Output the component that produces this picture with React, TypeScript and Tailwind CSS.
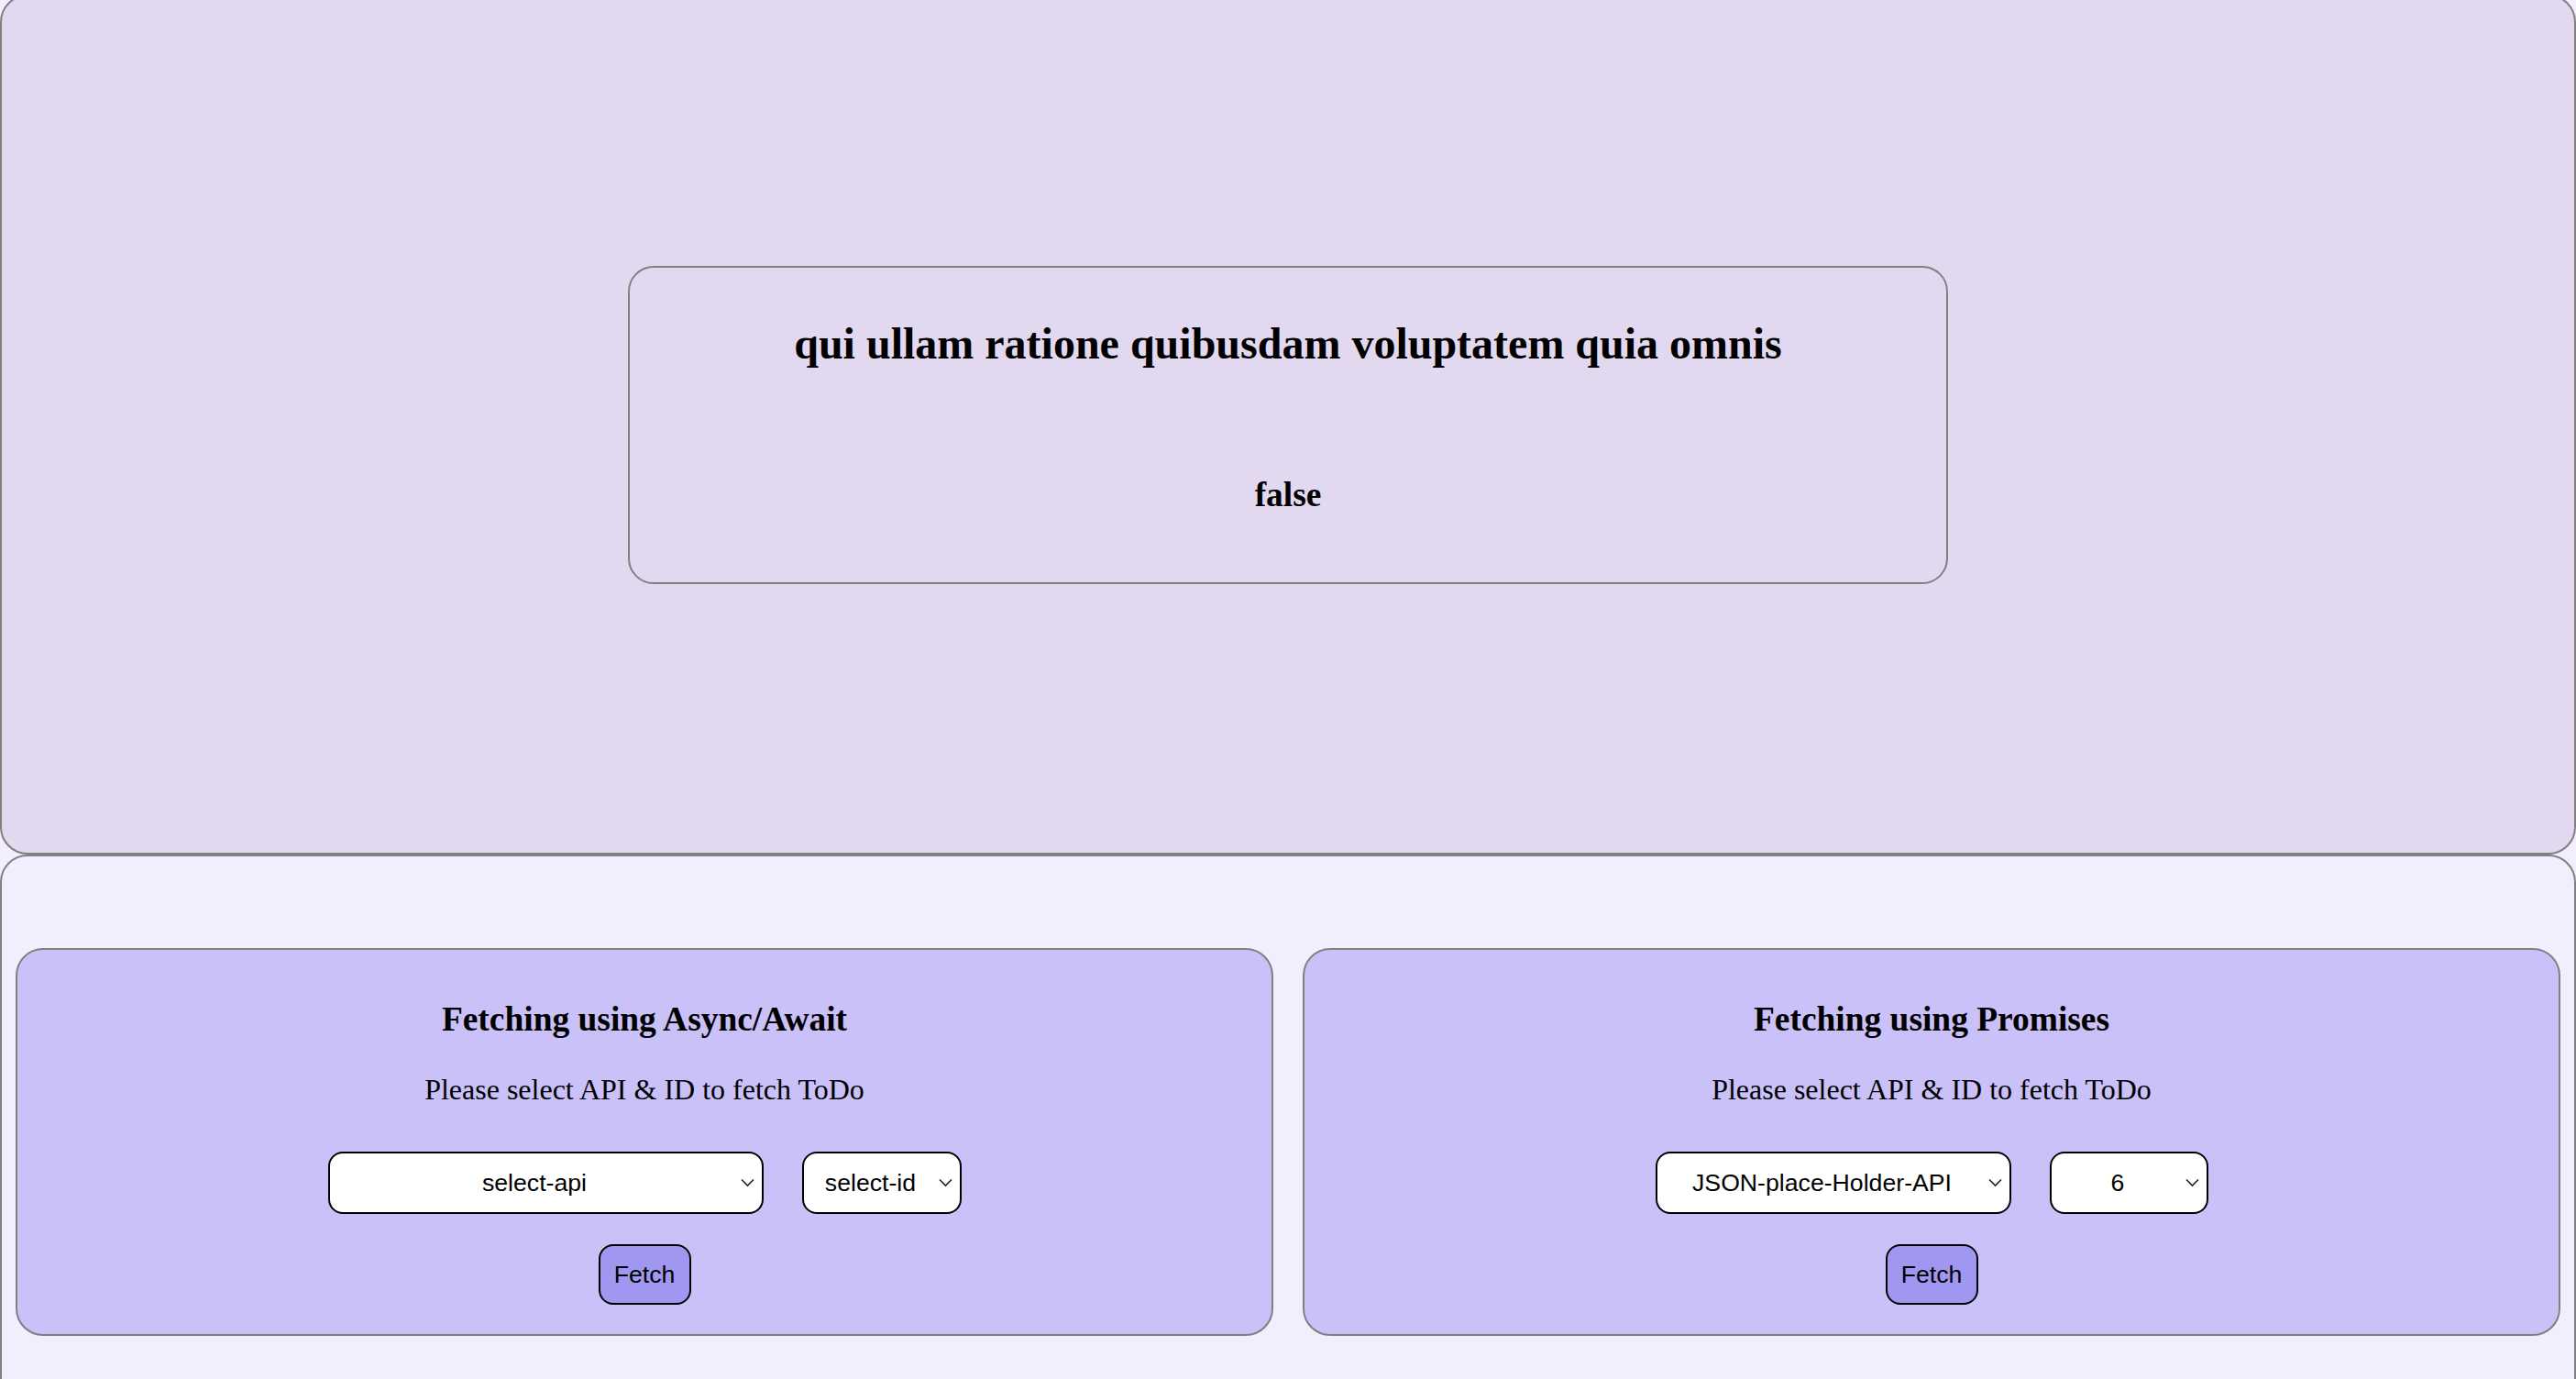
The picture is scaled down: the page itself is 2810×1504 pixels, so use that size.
import React from 'react'

const serif = { fontFamily: '"Liberation Serif", "Times New Roman", serif' }
const sans = { fontFamily: '"Liberation Sans", Arial, sans-serif' }

const Chevron = () => (
  <svg
    className="pointer-events-none absolute right-[10px] top-1/2 -translate-y-1/2"
    width="15"
    height="9"
    viewBox="0 0 15 9"
    fill="none"
  >
    <polyline points="1,1 7.5,7.5 14,1" stroke="#222" strokeWidth="1.6" fill="none" />
  </svg>
)

const Select: React.FC<{ value: string; options: string[]; width: string }> = ({ value, options, width }) => (
  <div className={`relative ${width}`}>
    <select
      defaultValue={value}
      style={{ ...sans, textAlignLast: 'center' }}
      className="h-[68px] w-full appearance-none rounded-[16px] border-2 border-black bg-white pl-[10px] pr-[34px] text-center text-[26.67px] text-black outline-none"
    >
      {options.map((o) => (
        <option key={o} value={o}>
          {o}
        </option>
      ))}
    </select>
    <Chevron />
  </div>
)

const FetchPanel: React.FC<{
  title: string
  api: string
  id: string
  apiWidth: string
  idWidth: string
}> = ({ title, api, id, apiWidth, idWidth }) => (
  <div className="flex flex-1 flex-col items-center rounded-[30px] border-2 border-[#808080] bg-[#c9c1f8] pt-[54px] pb-[32px]">
    <h3 style={serif} className="text-[37.44px] font-bold leading-[43px] text-black">
      {title}
    </h3>
    <p style={serif} className="mt-[37px] text-[32px] leading-[37px] text-black">
      Please select API &amp; ID to fetch ToDo
    </p>
    <div className="mt-[49px] flex items-center gap-[42px]">
      <Select value={api} width={apiWidth} options={['select-api', 'JSON-place-Holder-API', 'Dummy-JSON-Todos-API-v1']} />
      <Select value={id} width={idWidth} options={['select-id', '1', '2', '3', '4', '5', '6', '7', '8', '9', '10']} />
    </div>
    <button
      style={sans}
      className="mt-[33px] h-[66px] w-[101px] rounded-[16px] border-2 border-black bg-[#a097f0] text-[26.67px] text-black"
    >
      Fetch
    </button>
  </div>
)

export default function App() {
  return (
    <div className="min-h-screen overflow-hidden bg-[#f2eefd]">
      <section className="-mt-[6px] flex h-[938px] items-center justify-center rounded-[30px] border-2 border-[#808080] bg-[#e2d9f1]">
        <div className="flex w-[1440px] flex-col items-center rounded-[28px] border-2 border-[#808080] pt-[55px] pb-[74px]">
          <h2 style={serif} className="text-[48px] font-bold leading-[55px] text-black">
            qui ullam ratione quibusdam voluptatem quia omnis
          </h2>
          <h3 style={serif} className="mt-[116px] text-[37.44px] font-bold leading-[43px] text-black">
            false
          </h3>
        </div>
      </section>
      <section className="flex h-[640px] gap-[32px] rounded-[30px] border-2 border-[#808080] bg-[#f2eefd] px-[15px] pt-[100px]">
        <div className="flex h-[423px] flex-1">
          <FetchPanel
            title="Fetching using Async/Await"
            api="select-api"
            id="select-id"
            apiWidth="w-[475px]"
            idWidth="w-[174px]"
          />
        </div>
        <div className="flex h-[423px] flex-1">
          <FetchPanel
            title="Fetching using Promises"
            api="JSON-place-Holder-API"
            id="6"
            apiWidth="w-[388px]"
            idWidth="w-[173px]"
          />
        </div>
      </section>
    </div>
  )
}
